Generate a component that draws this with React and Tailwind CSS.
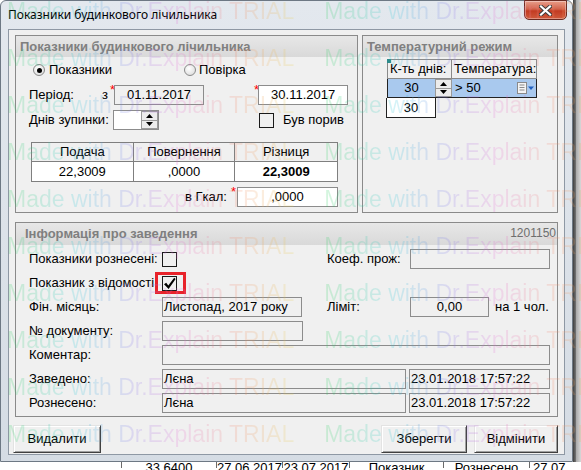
import React from 'react';

function Radio({ checked }) {
  return (
    <span className="w-[12px] h-[12px] rounded-full border border-[#8a8a8a] bg-[radial-gradient(circle_at_40%_35%,#ffffff,#d6d6d6)] flex items-center justify-center shrink-0">
      {checked && <span className="w-[5px] h-[5px] rounded-full bg-black" />}
    </span>
  );
}

function Check({ checked }) {
  return (
    <span className="w-[15px] h-[15px] border border-[#1a1a1a] flex items-center justify-center shrink-0">
      {checked && (
        <svg width="13" height="13" viewBox="0 0 13 13">
          <path d="M1 7.2 L3.2 5.8 L5.3 8.6 L11.2 0.8 L12.6 1.9 L5.6 12 Z" fill="#000" />
        </svg>
      )}
    </span>
  );
}

function Spin() {
  return (
    <div className="flex flex-col w-[17px] h-full shrink-0">
      <span className="flex-1 flex items-center justify-center bg-[#ececec] border border-[#9a9a9a]">
        <svg width="7" height="4" viewBox="0 0 7 4"><path d="M0 4 L3.5 0 L7 4 Z" fill="#000" /></svg>
      </span>
      <span className="flex-1 flex items-center justify-center bg-[#ececec] border border-t-0 border-[#9a9a9a]">
        <svg width="7" height="4" viewBox="0 0 7 4"><path d="M0 0 L3.5 4 L7 0 Z" fill="#000" /></svg>
      </span>
    </div>
  );
}

function Field({ className = '', white, center, children }) {
  return (
    <div
      className={`h-[20px] border border-[#8c8c8c] flex items-center shrink-0 whitespace-nowrap overflow-hidden ${
        white ? 'bg-white' : 'bg-[#f0f0f0]'
      } ${center ? 'justify-center' : 'pl-[1px]'} ${className}`}
    >
      {children}
    </div>
  );
}

function Star() {
  return <span className="text-[#ff0000] text-[13px] leading-none self-start mt-[-2px]">*</span>;
}

function Group({ title, right, headerClass = '', className = '', children }) {
  return (
    <div className={`border border-[#8a8a8a] flex flex-col ${className}`}>
      <div
        className={`flex items-center justify-between bg-[linear-gradient(180deg,#e7e7e7,#d9d9d9)] font-bold text-[#7f7f7f] ${headerClass}`}
      >
        <span>{title}</span>
        {right}
      </div>
      {children}
    </div>
  );
}

function Button({ className = '', children }) {
  return (
    <div
      className={`h-[28px] flex items-center justify-center bg-[#f0f0f0] border border-t-[#e3e3e3] border-l-[#e3e3e3] border-r-[#404040] border-b-[#404040] shadow-[inset_1px_1px_0_#ffffff,inset_-1px_-1px_0_#a0a0a0] ${className}`}
    >
      {children}
    </div>
  );
}

function DropIcon() {
  return (
    <svg width="18" height="12" viewBox="0 0 18 12" className="ml-auto mr-[1px]">
      <rect x="0.5" y="0.5" width="9" height="11" fill="#f4f4f4" stroke="#8a8a8a" />
      <path d="M2.5 3 H7.5 M2.5 5.5 H7.5 M2.5 8 H7.5" stroke="#8a8a8a" strokeWidth="1" />
      <path d="M11 4.5 L17 4.5 L14 8 Z" fill="#1f5fbf" />
    </svg>
  );
}

function CloseButton() {
  return (
    <div className="w-[43px] h-[20px] mt-[-1px] mr-[5px] rounded-b-[5px] border border-[#6b2b22] bg-[linear-gradient(180deg,#e8a08e_0%,#d2634b_45%,#c23b22_55%,#cf5a3c_100%)] shadow-[inset_0_0_0_1px_rgba(255,255,255,0.35)] flex items-center justify-center">
      <svg width="13" height="11" viewBox="0 0 13 11">
        <path d="M2 1.5 L11 9.5 M11 1.5 L2 9.5" stroke="#3a3a3a" strokeWidth="4" strokeLinecap="square" />
        <path d="M2 1.5 L11 9.5 M11 1.5 L2 9.5" stroke="#ffffff" strokeWidth="2.2" strokeLinecap="square" />
      </svg>
    </div>
  );
}

function WatermarkText() {
  return (
    <span className="bg-[linear-gradient(90deg,#2ecf5c_0%,#2cc8d8_24%,#8a78ec_44%,#e66fd4_60%,#f28a6a_80%,#e8d050_100%)] bg-clip-text text-transparent">
      Made with Dr.Explain TRIAL
    </span>
  );
}

function Watermark() {
  return (
    <div className="pointer-events-none absolute top-[-12px] left-0 right-0 bottom-0 flex flex-col opacity-[0.2]">
      {Array.from({ length: 11 }).map((_, i) => (
        <div key={i} className="h-[47px] leading-[47px] flex gap-[30px] pl-[7px] whitespace-nowrap text-[23px]">
          <WatermarkText />
          <WatermarkText />
        </div>
      ))}
    </div>
  );
}

const BACK_CELLS = [
  { w: 'w-[122px]', text: '' },
  { w: 'w-[95px]', text: '33,6400' },
  { w: 'w-[66px]', text: '27.06.2017' },
  { w: 'w-[67px]', text: '23.07.2017' },
  { w: 'w-[94px]', text: 'Показник' },
  { w: 'w-[86px]', text: 'Рознесено' },
];

export default function App() {
  return (
    <div className="relative w-[581px] h-[470px] overflow-hidden bg-white font-['Liberation_Sans',Arial,sans-serif] text-[13px] text-black">
      <div className="flex h-[462px]">
        {/* window */}
        <div className="w-[573px] h-[462px] flex flex-col rounded-t-[6px] border border-[#6d7884] bg-[linear-gradient(180deg,#e3e8ee,#d5dce4)]">
          <div className="h-[28px] flex items-start shrink-0">
            <span className="self-center pl-[7px] font-['Noto_Sans',sans-serif] text-[12px] text-black">
              Показники будинкового лічильника
            </span>
            <span className="ml-auto" />
            <CloseButton />
          </div>

          <div className="flex px-[7px]">
            <div className="w-[557px] h-[426px] border border-[#8e98a4] bg-[#f0f0f0] flex flex-col">
              {/* top groups */}
              <div className="flex gap-[4px] pl-[6px] pt-[5px]">
                <Group title="Показники будинкового лічильника" headerClass="h-[21px] pl-[4px]" className="w-[343px] h-[178px]">
                  <div className="flex items-center h-[14px] mt-[6px] pl-[17px]">
                    <div className="w-[151px] flex items-center gap-[4px]">
                      <Radio checked />
                      <span>Показники</span>
                    </div>
                    <div className="flex items-center gap-[3px]">
                      <Radio />
                      <span>Повірка</span>
                    </div>
                  </div>

                  <div className="flex items-center h-[20px] mt-[8px] pl-[13px]">
                    <span className="w-[73px]">Період:</span>
                    <span className="w-[8px]">з</span>
                    <Star />
                    <Field center className="w-[90px] ml-[-1px]">01.11.2017</Field>
                    <span className="w-[50px]" />
                    <Star />
                    <Field white center className="w-[90px] ml-[-1px]">30.11.2017</Field>
                  </div>

                  <div className="flex items-center h-[20px] mt-[5px] pl-[13px]">
                    <span className="w-[84px]">Днів зупинки:</span>
                    <div className="w-[46px] h-[20px] bg-white border border-[#8c8c8c] flex justify-end">
                      <Spin />
                    </div>
                    <span className="w-[100px]" />
                    <Check />
                    <span className="ml-[9px]">Був порив</span>
                  </div>

                  <div className="ml-[15px] mt-[12px] w-[307px] border border-[#7f7f7f] grid grid-cols-3">
                    <div className="h-[19px] flex items-center justify-center border-r border-b border-[#7f7f7f]">Подача</div>
                    <div className="h-[19px] flex items-center justify-center border-r border-b border-[#7f7f7f]">Повернення</div>
                    <div className="h-[19px] flex items-center justify-center border-b border-[#7f7f7f]">Різниця</div>
                    <div className="h-[19px] flex items-center justify-center border-r border-[#7f7f7f] bg-white">22,3009</div>
                    <div className="h-[19px] flex items-center justify-center border-r border-[#7f7f7f] bg-white">,0000</div>
                    <div className="h-[19px] flex items-center justify-center bg-white font-bold">22,3009</div>
                  </div>

                  <div className="flex items-center justify-end h-[20px] mt-[5px] pr-[19px]">
                    <span className="mr-[4px]">в Гкал:</span>
                    <Star />
                    <Field white center className="w-[101px] ml-[1px]">,0000</Field>
                  </div>
                </Group>

                <Group title="Температурний режим" headerClass="h-[21px] pl-[4px]" className="w-[196px] h-[178px]">
                  <div className="relative ml-[24px] mt-[2px] w-[150px]">
                    <span className="absolute left-0 top-0 w-[4px] h-[4px] bg-[#2e8c8c]" />
                    <div className="flex h-[20px]">
                      <div className="w-[65px] border border-[#8a8a8a] pl-[2px] flex items-center">К-ть днів:</div>
                      <div className="w-[85px] border border-l-0 border-[#8a8a8a] pl-[2px] flex items-center">Температура:</div>
                    </div>
                    <div className="flex h-[19px] bg-[#a9c9ee] border border-t-0 border-[#222]">
                      <div className="w-[47px] flex items-center justify-center">30</div>
                      <Spin />
                      <div className="flex-1 flex items-center pl-[3px]">
                        <span>&gt; 50</span>
                        <DropIcon />
                      </div>
                    </div>
                    <div className="w-[50px] h-[20px] ml-[-1px] bg-white border border-t-0 border-[#222] flex items-center justify-center">
                      30
                    </div>
                  </div>
                </Group>
              </div>

              {/* info group */}
              <Group
                title="Інформація про заведення"
                headerClass="h-[22px] pl-[9px] pr-[1px]"
                className="w-[543px] h-[195px] ml-[6px] mt-[9px]"
                right={<span className="font-normal text-[12px] text-[#6e6e6e] mb-[2px]">1201150</span>}
              >
                <div className="flex flex-col gap-[4px] mt-[4px] pl-[13px]">
                  <div className="flex items-center h-[20px]">
                    <div className="w-[298px] flex items-center">
                      <span className="w-[133px]">Показники рознесені:</span>
                      <Check />
                    </div>
                    <span className="w-[83px]">Коеф. прож:</span>
                    <Field className="w-[140px]" />
                  </div>

                  <div className="flex items-center h-[20px]">
                    <span className="w-[133px]">Показник з відомості</span>
                    <div className="relative">
                      <Check checked />
                      <span className="absolute left-[-7px] right-[-9px] top-[-4px] bottom-[-3px] border-[3px] border-[#e8232a]" />
                    </div>
                  </div>

                  <div className="flex items-center h-[20px]">
                    <div className="w-[298px] flex items-center">
                      <span className="w-[133px]">Фін. місяць:</span>
                      <Field className="w-[140px]">Листопад, 2017 року</Field>
                    </div>
                    <span className="w-[83px]">Ліміт:</span>
                    <Field center className="w-[79px]">0,00</Field>
                    <span className="ml-[6px]">на 1 чол.</span>
                  </div>

                  <div className="flex items-center h-[20px]">
                    <span className="w-[133px]">№ документу:</span>
                    <Field className="w-[141px]" />
                  </div>

                  <div className="flex items-center h-[20px]">
                    <span className="w-[133px]">Коментар:</span>
                    <Field className="w-[388px]" />
                  </div>

                  <div className="flex items-center h-[20px]">
                    <span className="w-[133px]">Заведено:</span>
                    <Field className="w-[244px]">Лєна</Field>
                    <Field className="w-[141px] ml-[3px]">23.01.2018 17:57:22</Field>
                  </div>

                  <div className="flex items-center h-[20px]">
                    <span className="w-[133px]">Рознесено:</span>
                    <Field className="w-[244px]">Лєна</Field>
                    <Field className="w-[141px] ml-[3px]">23.01.2018 17:57:22</Field>
                  </div>
                </div>
              </Group>

              {/* buttons */}
              <div className="flex items-center mt-[8px] pl-[4px] pr-[6px]">
                <Button className="w-[88px]">Видалити</Button>
                <Button className="w-[86px] ml-auto">Зберегти</Button>
                <Button className="w-[84px] ml-[7px]">Відмінити</Button>
              </div>
            </div>
          </div>
        </div>

        {/* background at right */}
        <div className="w-[8px] flex">
          <div className="w-[3px] bg-[linear-gradient(90deg,#3f3f3f,#777)]" />
          <div className="flex-1 bg-[linear-gradient(90deg,#a8a8a8,#d8d8d8)]" />
        </div>
      </div>

      {/* background table below the window */}
      <div className="h-[8px] flex bg-white overflow-hidden">
        {BACK_CELLS.map((cell, i) => (
          <div key={i} className={`${cell.w} h-full border-r border-[#6a6a6a] flex justify-center leading-[16px] mt-[-2px]`}>
            {cell.text}
          </div>
        ))}
        <div className="flex-1 pl-[3px] leading-[16px] mt-[-2px]">27.07</div>
      </div>

      <Watermark />
    </div>
  );
}
